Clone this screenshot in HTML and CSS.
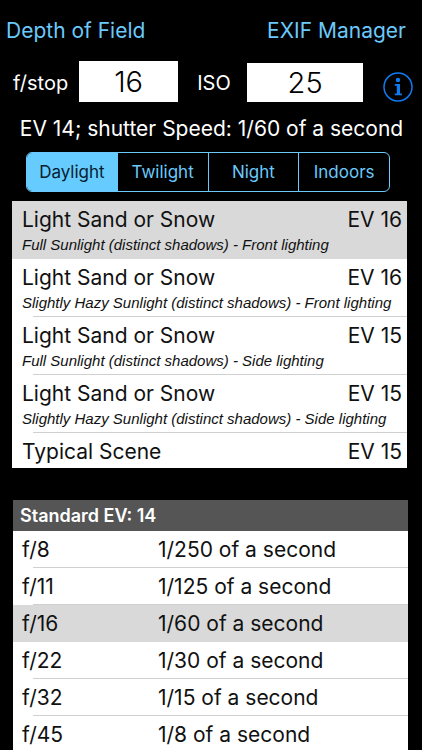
FILE: index.html
```html
<!DOCTYPE html>
<html lang="en">
<head>
  <meta charset="UTF-8" />
  <meta name="viewport" content="width=device-width, initial-scale=1.0" />
  <title>Exposure Value</title>
  <link rel="stylesheet" href="styles.css">
</head>
<body>
  <nav class="topbar">
    <a href="#dof">Depth of Field</a>
    <a href="#exif">EXIF Manager</a>
  </nav>

  <div class="settings">
    <label class="fstop-label" for="fstop">f/stop</label>
    <input class="fstop" type="text" id="fstop" value="16" />
    <label class="iso-label" for="iso">ISO</label>
    <input class="iso" type="text" id="iso" value="25" />
    <button class="info" type="button" aria-label="Info">
      <svg width="30" height="30" viewBox="0 0 30 30">
        <circle cx="15" cy="15" r="14" fill="none" stroke="#0f7bf0" stroke-width="1.5" />
        <circle cx="15" cy="8" r="2.2" fill="#0f7bf0" />
        <path d="M11.8 12h5.2v9.6h1.9v1.7h-7.1v-1.7h2v-7.9h-2z" fill="#0f7bf0" />
      </svg>
    </button>
  </div>

  <p class="result">EV 14; shutter Speed: 1/60 of a second</p>

  <div class="segments">
    <input type="radio" name="light" id="daylight" checked />
    <label for="daylight">Daylight</label>
    <input type="radio" name="light" id="twilight" />
    <label for="twilight">Twilight</label>
    <input type="radio" name="light" id="night" />
    <label for="night">Night</label>
    <input type="radio" name="light" id="indoors" />
    <label for="indoors">Indoors</label>
  </div>

  <ul class="scenes">
    <li class="selected">
      <div class="scene"><span>Light Sand or Snow</span><span>EV 16</span></div>
      <div class="detail">Full Sunlight (distinct shadows) - Front lighting</div>
    </li>
    <li>
      <div class="scene"><span>Light Sand or Snow</span><span>EV 16</span></div>
      <div class="detail">Slightly Hazy Sunlight (distinct shadows) - Front lighting</div>
    </li>
    <li>
      <div class="scene"><span>Light Sand or Snow</span><span>EV 15</span></div>
      <div class="detail">Full Sunlight (distinct shadows) - Side lighting</div>
    </li>
    <li>
      <div class="scene"><span>Light Sand or Snow</span><span>EV 15</span></div>
      <div class="detail">Slightly Hazy Sunlight (distinct shadows) - Side lighting</div>
    </li>
    <li>
      <div class="scene"><span>Typical Scene</span><span>EV 15</span></div>
    </li>
  </ul>

  <div class="speeds">
    <table>
      <thead>
        <tr><th colspan="2">Standard EV: 14</th></tr>
      </thead>
      <tbody>
        <tr><td>f/8</td><td>1/250 of a second</td></tr>
        <tr><td>f/11</td><td>1/125 of a second</td></tr>
        <tr class="selected"><td>f/16</td><td>1/60 of a second</td></tr>
        <tr><td>f/22</td><td>1/30 of a second</td></tr>
        <tr><td>f/32</td><td>1/15 of a second</td></tr>
        <tr><td>f/45</td><td>1/8 of a second</td></tr>
      </tbody>
    </table>
  </div>
</body>
</html>
```

FILE: styles.css
```css
* {
  box-sizing: border-box;
}
body {
  margin: 0;
  height: 100vh;
  overflow: hidden;
  display: flex;
  flex-direction: column;
  background: #000;
  color: #fff;
  font-family: Inter, "Liberation Sans", sans-serif;
  font-size: 21px;
}
.topbar {
  display: flex;
  justify-content: space-between;
  padding: 16px 16px 0 6px;
  line-height: 30px;
}
.topbar a {
  color: #6bc9fb;
  text-decoration: none;
}
.settings {
  display: flex;
  align-items: flex-end;
  padding: 15px 9px 0 13px;
}
.settings label {
  font-size: 20px;
  line-height: 38px;
}
.fstop-label {
  width: 66px;
}
.iso-label {
  width: 50px;
}
.settings input {
  flex: 1;
  min-width: 0;
  height: 39px;
  padding: 0;
  border: none;
  border-radius: 0;
  background: #fff;
  color: #000;
  font-family: inherit;
  font-size: 29px;
  font-weight: 300;
  text-align: center;
}
.settings .fstop {
  flex: 6;
  height: 41px;
  margin-right: 19px;
}
.settings .iso {
  flex: 7;
  margin-right: 20px;
}
.info {
  width: 30px;
  height: 30px;
  padding: 0;
  border: none;
  background: none;
}
.info svg {
  display: block;
}
.result {
  margin: 12px 15px 0 16px;
  line-height: 30px;
  text-align: center;
  white-space: nowrap;
}

/* daylight / twilight / night / indoors */
.segments {
  display: flex;
  flex-shrink: 0;
  height: 40px;
  margin: 8px 32px 0 26px;
  border: 1px solid #6bc9fb;
  border-radius: 6px;
  overflow: hidden;
}
.segments input {
  position: absolute;
  opacity: 0;
}
.segments label {
  flex: 1;
  border-left: 1px solid #6bc9fb;
  color: #6bc9fb;
  font-size: 17px;
  line-height: 38px;
  text-align: center;
}
.segments input:first-child + label {
  border-left: none;
}
.segments input:checked + label {
  background: #66ccff;
  color: #04202e;
}

.scenes {
  flex-shrink: 0;
  height: 267px;
  margin: 9px 15px 0 12px;
  padding: 0;
  overflow: hidden;
  list-style: none;
  background: #fff;
  color: #111;
}
.scenes li {
  height: 58px;
  padding: 5px 0 0 10px;
  background: linear-gradient(#d0d0d0, #d0d0d0) 21px 100% / 100% 1px no-repeat;
}
.scenes li.selected {
  background: #d9d9d9;
}
.scene {
  display: flex;
  justify-content: space-between;
  padding-right: 5px;
  line-height: 28px;
}
.detail {
  font-family: "Liberation Sans", sans-serif;
  font-size: 15px;
  font-style: italic;
  line-height: 22px;
  white-space: nowrap;
}

.speeds {
  flex: 1;
  min-height: 0;
  margin: 32px 14px 0 13px;
  overflow: hidden;
}
.speeds table {
  width: 100%;
  border-collapse: collapse;
  background: #fff;
  color: #111;
}
.speeds th {
  height: 31px;
  padding: 0 7px;
  background: #555;
  color: #fff;
  font-size: 18px;
  font-weight: 600;
  text-align: left;
}
.speeds td {
  height: 37px;
  padding: 1px 0 0;
  font-size: 21px;
  line-height: 36px;
}
.speeds td:first-child {
  width: 145px;
  padding-left: 9px;
}
.speeds tbody tr {
  background: linear-gradient(#d0d0d0, #d0d0d0) 20px 100% / 100% 1px no-repeat;
}
.speeds tbody tr.selected {
  background: #d9d9d9;
}
```
